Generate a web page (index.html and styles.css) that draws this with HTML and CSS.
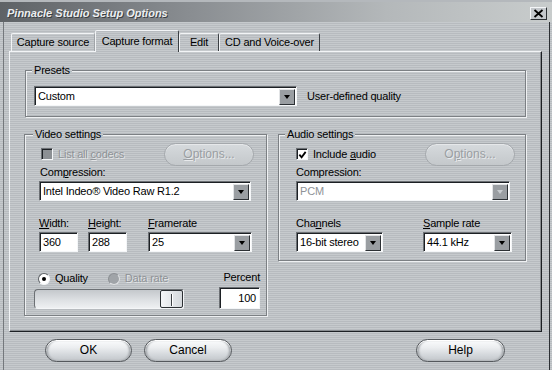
FILE: index.html
```html
<!DOCTYPE html>
<html>
<head>
<meta charset="utf-8">
<link rel="stylesheet" href="styles.css">
</head>
<body>
<div class="titlebar">
  <span class="title">Pinnacle Studio Setup Options</span>
  <span class="close"><svg width="11" height="9" viewBox="0 0 11 9"><path d="M1.5 1 L9.5 8 M9.5 1 L1.5 8" stroke="#000" stroke-width="1.8" fill="none"/></svg></span>
</div>
<div class="frame">
  <div class="tabs">
    <div class="tab t1">Capture source</div>
    <div class="tab t2 sel">Capture format</div>
    <div class="tab t3">Edit</div>
    <div class="tab t4">CD and Voice-over</div>
  </div>
  <div class="panel">
    <fieldset class="group presets">
      <legend>Presets</legend>
      <div class="row">
        <div class="combo w-presets"><span class="val">Custom</span><span class="drop"></span></div>
        <span class="desc">User-defined quality</span>
      </div>
    </fieldset>
    <div class="groups">
      <fieldset class="group video">
        <legend>Video settings</legend>
        <div class="row top-row v-top">
          <span class="check disabled"></span><span class="cklbl dis">List all <u>c</u>odecs</span>
          <span class="btn opt disabled"><u>O</u>ptions...</span>
        </div>
        <div class="lbl cap">Com<u>p</u>ression:</div>
        <div class="combo w-vcomp"><span class="val">Intel Indeo® Video Raw R1.2</span><span class="drop"></span></div>
        <div class="fields">
          <div class="col c-w"><div class="lbl"><u>W</u>idth:</div><div class="field">360</div></div>
          <div class="col c-h"><div class="lbl"><u>H</u>eight:</div><div class="field">288</div></div>
          <div class="col c-f"><div class="lbl"><u>F</u>ramerate</div><div class="combo"><span class="val">25</span><span class="drop"></span></div></div>
        </div>
        <div class="bottom">
          <div class="left">
            <div class="radios">
              <span class="radio on"></span><span class="rlbl">Quality</span>
              <span class="radio disabled r2"></span><span class="rlbl dis">Data rate</span>
            </div>
            <div class="slider"><span class="thumb"></span></div>
          </div>
          <div class="right">
            <div class="lbl pct-lbl">Percent</div>
            <div class="field pct">100</div>
          </div>
        </div>
      </fieldset>
      <fieldset class="group audio">
        <legend>Audio settings</legend>
        <div class="row top-row a-top">
          <span class="check on"><svg width="10" height="10" viewBox="0 0 10 10"><path d="M1.5 4.5 L4 7.5 L8.5 1.5" stroke="#000" stroke-width="2" fill="none"/></svg></span><span class="cklbl">Include <u>a</u>udio</span>
          <span class="btn opt disabled">O<u>p</u>tions...</span>
        </div>
        <div class="lbl cap">Compression:</div>
        <div class="combo w-acomp"><span class="val dis-val">PCM</span><span class="drop dis-drop"></span></div>
        <div class="fields">
          <div class="col c-ch"><div class="lbl">Cha<u>n</u>nels</div><div class="combo"><span class="val">16-bit stereo</span><span class="drop"></span></div></div>
          <div class="col c-sr"><div class="lbl"><u>S</u>ample rate</div><div class="combo"><span class="val">44.1 kHz</span><span class="drop"></span></div></div>
        </div>
      </fieldset>
    </div>
  </div>
  <div class="buttons">
    <span class="btn b-ok">OK</span>
    <span class="btn b-cancel">Cancel</span>
    <span class="btn b-help">Help</span>
  </div>
</div>
</body>
</html>
```

FILE: styles.css
```css
* { box-sizing: border-box; }
html, body { margin: 0; padding: 0; }
body {
  width: 552px;
  height: 370px;
  overflow: hidden;
  font: 11px/13px "Liberation Sans", Arial, sans-serif;
  letter-spacing: -0.2px;
  color: #000;
  background: repeating-linear-gradient(to bottom, #c6cacd 0px, #c6cacd 1px, #b7bbbf 1px, #b7bbbf 2px) fixed;
}
u { text-decoration: underline; text-underline-offset: 1px; }

/* title bar */
.titlebar {
  height: 22px;
  border-top: 2px solid #b4b8bc;
  padding: 2px 5px 0 7px;
  display: flex;
  align-items: center;
  background: linear-gradient(to right, #5e6266 0%, #8a8e92 35%, #b4b8ba 70%, #c8cccc 100%);
}
.title {
  flex: 1;
  font-weight: bold;
  font-style: italic;
  letter-spacing: 0;
  color: #eceef0;
  text-shadow: 1px 1px 0 #3a3e42;
}
.close {
  width: 17px;
  height: 13px;
  background: #c4c8cc;
  border: 1px solid;
  border-color: #f4f6f8 #2c3034 #2c3034 #f4f6f8;
  display: flex;
  align-items: center;
  justify-content: center;
}
.close svg { display: block; }

/* frame */
.frame {
  margin-left: 3px;
  width: 547px;
  height: 348px;
  border-left: 1px solid #74787c;
  border-right: 1px solid #2c3034;
  padding-top: 8px;
}
.tabs {
  display: flex;
  align-items: flex-end;
  height: 21px;
  padding-left: 7px;
}
.tab {
  height: 18px;
  border: 1px solid;
  border-bottom: 0;
  border-color: #f2f4f6 #3c4044 transparent #f2f4f6;
  border-radius: 2px 2px 0 0;
  display: flex;
  align-items: center;
  justify-content: center;
  white-space: nowrap;
}
.t1 { width: 84px; border-right-color: #a0a4a8; }
.t2 { width: 84px; }
.t3 { width: 40px; }
.t4 { width: 101px; }
.tab.sel {
  height: 22px;
  margin-bottom: -1px;
  position: relative;
  z-index: 1;
  background: repeating-linear-gradient(to bottom, #c6cacd 0px, #c6cacd 1px, #b7bbbf 1px, #b7bbbf 2px) fixed;
}

/* panel */
.panel {
  margin-left: 5px;
  width: 533px;
  height: 281px;
  border: 1px solid;
  border-color: #f2f4f6 #1c2024 #1c2024 #f2f4f6;
  box-shadow: inset -1px -1px 0 #888c90;
  padding: 12px 0 0 15px;
}

/* group boxes */
.group {
  margin: 0;
  min-width: 0;
  border: 1px solid #7c8084;
  box-shadow: 1px 1px 0 #eef0f2, inset 1px 1px 0 #eef0f2;
}
.group legend {
  padding: 0 2px;
  line-height: 13px;
  background: repeating-linear-gradient(to bottom, #c6cacd 0px, #c6cacd 1px, #b7bbbf 1px, #b7bbbf 2px) fixed;
}
.presets { width: 501px; padding: 9px 0 10px 8px; }
.presets legend { margin-left: -2px; }
.presets .combo { margin-top: 0; }
.row { display: flex; align-items: center; }
.desc { margin-left: 10px; }

.groups {
  display: flex;
  align-items: flex-start;
  margin-top: 11px;
  margin-left: -1px;
}
.video { width: 243px; padding: 3px 0 6px 14px; }
.video legend { margin-left: -6px; }
.audio { width: 248px; margin-left: 11px; padding: 3px 0 8px 17px; }
.audio legend { margin-left: -11px; }

.top-row { height: 20px; }
.v-top { width: 215px; }
.v-top .check { margin-left: 2px; }
.a-top { width: 219px; }
.cklbl { margin-left: 5px; }
.dis { color: #8e9296; text-shadow: 1px 1px 0 #e4e6e8; }
.opt { margin-left: auto; width: 90px; height: 20px; }

.lbl { height: 13px; white-space: nowrap; }
.cap { margin-top: 2px; }
.video .cap { margin-left: 1px; }

/* combo box */
.combo {
  display: flex;
  align-items: center;
  height: 20px;
  margin-top: 2px;
  background: #fff;
  border: 1px solid;
  border-color: #6c7074 #f4f6f8 #f4f6f8 #6c7074;
  box-shadow: inset 1px 1px 0 #1c2024;
  padding: 1px 1px 0 3px;
}
.combo .val { flex: 1; white-space: nowrap; overflow: hidden; }
.drop {
  width: 16px;
  height: 16px;
  background: #9a9ea2;
  border: 1px solid;
  border-color: #e2e4e6 #2c3034 #2c3034 #e2e4e6;
  display: flex;
  align-items: center;
  justify-content: center;
}
.drop::after {
  content: "";
  border-left: 3px solid transparent;
  border-right: 3px solid transparent;
  border-top: 4px solid #000;
}
.dis-val { color: #8e9296; }
.dis-drop::after { border-top-color: #c8ccd0; }
.w-presets { width: 263px; }
.w-vcomp { width: 212px; }
.w-acomp { width: 214px; }

/* field rows */
.fields { display: flex; margin-top: 16px; }
.col .combo, .col .field { margin-top: 2px; }
.c-w { width: 39px; }
.c-h { width: 39px; margin-left: 10px; }
.c-f { width: 104px; margin-left: 21px; }
.c-ch { width: 87px; }
.c-sr { width: 89px; margin-left: 40px; }

.field {
  height: 20px;
  background: #fff;
  border: 1px solid;
  border-color: #6c7074 #f4f6f8 #f4f6f8 #6c7074;
  box-shadow: inset 1px 1px 0 #1c2024;
  padding: 0 3px;
  line-height: 18px;
}

/* check / radio */
.check {
  width: 12px;
  height: 12px;
  background: #fff;
  border: 1px solid;
  border-color: #6c7074 #f4f6f8 #f4f6f8 #6c7074;
  box-shadow: inset 1px 1px 0 #1c2024;
  display: flex;
  align-items: center;
  justify-content: center;
  flex: none;
}
.check svg { display: block; margin: 1px 0 0 1px; }
.check.disabled { background: #8c9094; }

.bottom { display: flex; margin-top: 20px; width: 221px; }
.left { flex: 1; }
.radios { display: flex; align-items: center; height: 13px; }
.radio {
  width: 12px;
  height: 12px;
  border-radius: 50%;
  background: #fff;
  border: 1px solid;
  border-color: #5c6064 #f4f6f8 #f4f6f8 #5c6064;
  margin-left: -1px;
  display: flex;
  align-items: center;
  justify-content: center;
  flex: none;
}
.radio.on::after {
  content: "";
  width: 4px;
  height: 4px;
  border-radius: 50%;
  background: #000;
}
.radio.disabled { background: #a0a4a8; border-color: #8c9094 #e0e2e4 #e0e2e4 #8c9094; }
.r2 { margin-left: 20px; }
.rlbl { margin-left: 5px; }

.slider {
  width: 150px;
  height: 20px;
  margin: 4px 0 0 -5px;
  border: 1px solid;
  border-color: #6c7074 #f4f6f8 #f4f6f8 #6c7074;
  border-radius: 4px 2px 2px 4px;
  background: linear-gradient(to bottom, #c4c8cc, #dfe2e5 60%, #eef0f2);
  display: flex;
  justify-content: flex-end;
}
.thumb {
  width: 23px;
  height: 100%;
  background: linear-gradient(to right, #f4f6f8, #d4d8dc);
  border: 1px solid #2c3034;
  border-radius: 2px;
  display: flex;
  justify-content: center;
}
.thumb::after {
  content: "";
  width: 1px;
  height: 12px;
  margin-top: 3px;
  background: #3c4044;
  box-shadow: 1px 0 0 #ffffff;
}
.right { width: 41px; margin-top: -1px; }
.pct-lbl { text-align: right; }
.pct { margin-top: 3px; height: 22px; line-height: 20px; text-align: right; }

/* buttons */
.btn {
  display: flex;
  align-items: center;
  justify-content: center;
  height: 23px;
  border-radius: 12px;
  border: 1px solid #54585c;
  background: linear-gradient(to bottom, #fbfcfd 0%, #eceef0 35%, #d4d8dc 70%, #c2c6ca 100%);
  box-shadow: inset 0 1px 0 #ffffff, inset 2px 0 2px #a8acb0, inset -2px 0 2px #a8acb0;
  font-size: 12px;
  letter-spacing: 0;
}
.btn.disabled {
  border-color: #a4a8ac;
  background: linear-gradient(to bottom, #d6dadd 0%, #cdd1d4 50%, #c4c8cb 100%);
  box-shadow: inset 0 1px 0 #e6e8ea;
  color: #9a9ea2;
  text-shadow: 1px 1px 0 #e8eaec;
}
.buttons {
  display: flex;
  margin-top: 7px;
  padding-left: 41px;
}
.b-ok { width: 87px; }
.b-cancel { width: 88px; margin-left: 12px; }
.b-help { width: 89px; margin-left: auto; margin-right: 44px; }
```
